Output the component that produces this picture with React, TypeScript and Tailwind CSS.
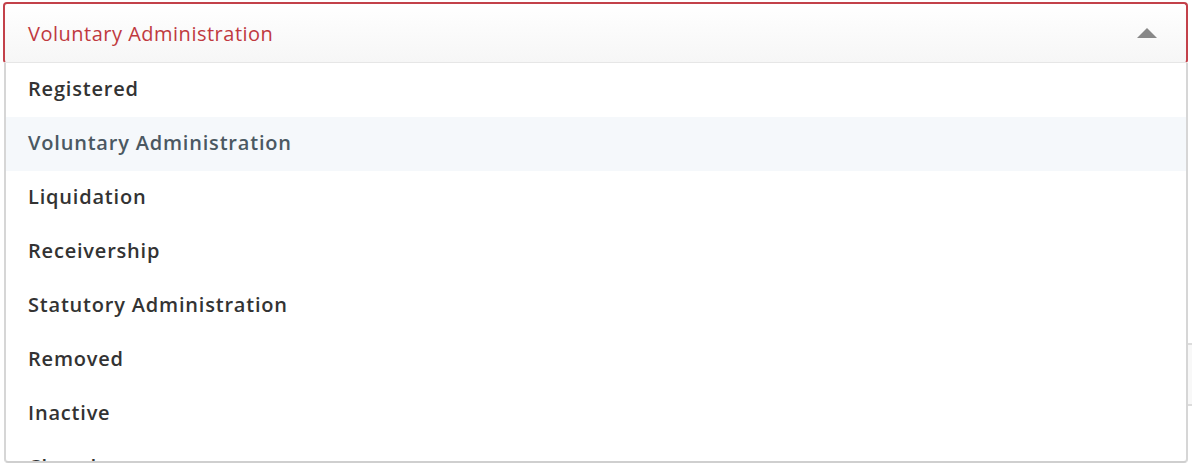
import React from "react";

const options = [
  "Registered",
  "Voluntary Administration",
  "Liquidation",
  "Receivership",
  "Statutory Administration",
  "Removed",
  "Inactive",
  "Closed",
];

export default function App() {
  return (
    <div
      className="relative h-[466px] w-[1192px] overflow-hidden bg-white"
      style={{ fontFamily: "'Open Sans', Lato, sans-serif" }}
    >
      <div className="absolute left-[1188px] top-[343px] h-[63px] w-[20px] border-y-2 border-[#dcdcdc] bg-[#f8f8f8]" />
      <div className="absolute left-[3px] top-[2px] w-[1185px]">
        <div className="flex h-[61px] items-center justify-between rounded-t-[4px] rounded-b-[3px] border-x-2 border-t-2 border-b border-x-[#c3414a] border-t-[#c3414a] border-b-[#e6e6e6] bg-gradient-to-b from-white to-[#f6f6f6] pl-[23px] pr-[29px]">
          <span className="pt-[2px] text-[20px] leading-none tracking-[0.5px] text-[#c0393f]">Voluntary Administration</span>
          <svg width="20" height="10" viewBox="0 0 20 10">
            <polygon points="0,10 10,0 20,10" fill="#888888" />
          </svg>
        </div>
        <div className="ml-[1px] h-[400px] w-[1184px] overflow-hidden rounded-b-[4px] border-x-2 border-b-2 border-x-[#d6d6d6] border-b-[#cfcfcf] bg-white">
          {options.map((o, i) => (
            <div
              key={o}
              className={
                "flex h-[54px] items-center pb-[3px] pl-[22px] text-[20px] font-semibold leading-none tracking-[0.8px] " +
                (i === 1 ? "bg-[#f5f8fb] text-[#4b5862]" : "text-[#333333]")
              }
            >
              {o}
            </div>
          ))}
        </div>
      </div>
    </div>
  );
}
